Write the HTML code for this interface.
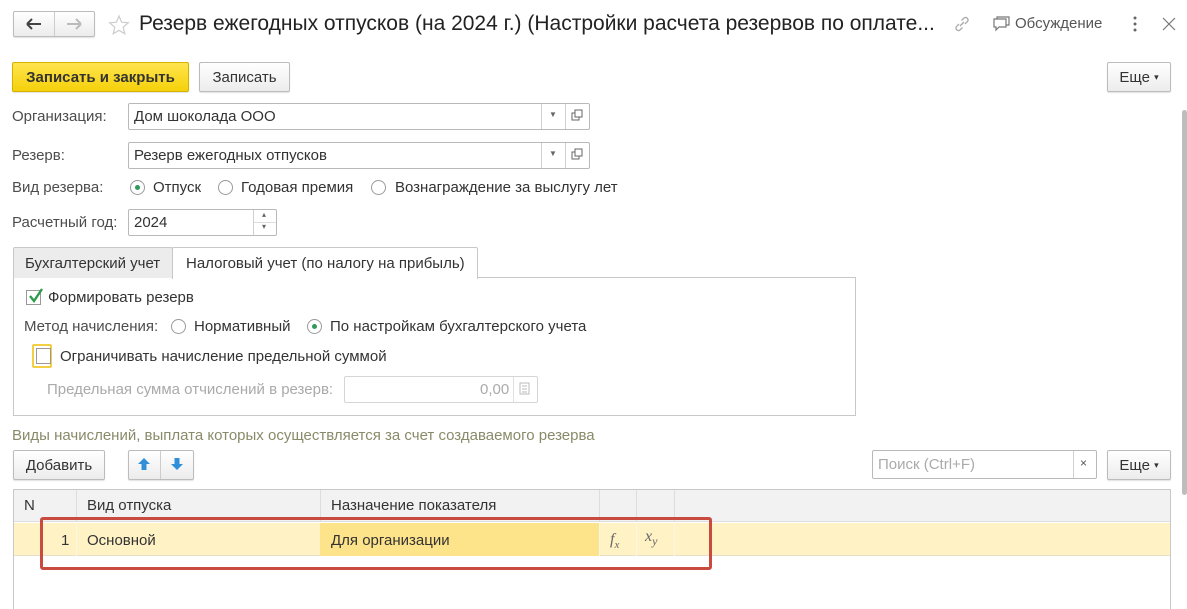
<!DOCTYPE html>
<html><head><meta charset="utf-8"><style>
*{box-sizing:border-box;margin:0;padding:0}
body{width:1187px;height:602px;background:#fff;font-family:"Liberation Sans",Arial,sans-serif;font-size:15px;color:#333;position:relative;overflow:hidden}
.a{position:absolute;white-space:nowrap}
.btn{position:absolute;border:1px solid #bcbcbc;border-radius:2px;background:linear-gradient(#fff,#ececec);box-shadow:0 1px 1px rgba(0,0,0,.12);display:flex;align-items:center;justify-content:center;font-size:15px;color:#333}
.fld{position:absolute;border:1px solid #b9b9b9;border-radius:2px;background:#fff;font-size:15px;color:#333;padding-left:5px;display:flex;align-items:center}
.rb{position:absolute;width:15px;height:15px;border:1px solid #9a9a9a;border-radius:50%;background:#fff}
.rb.on::after{content:"";position:absolute;left:4px;top:4px;width:5px;height:5px;border-radius:50%;background:#2f9a5a}
.lbl{position:absolute;white-space:nowrap;font-size:15px;color:#4d4d4d}
.sep{position:absolute;width:1px;background:#d0d0d0}
</style></head><body>
<div class="btn" style="left:13px;top:11px;width:82px;height:26px;"></div>
<div class="sep" style="left:54px;top:12px;height:24px;background:#ccc"></div>
<svg class="a" style="left:26px;top:18px" width="16" height="12"><path d="M1 6H15M1 6L6 1M1 6L6 11" stroke="#444" stroke-width="2" fill="none"/></svg>
<svg class="a" style="left:66px;top:18px" width="16" height="12"><path d="M1 6H15M15 6L10 1M15 6L10 11" stroke="#bbb" stroke-width="2" fill="none"/></svg>
<svg class="a" style="left:108px;top:14px" width="22" height="22"><path d="M11 2L13.6 8.2 20.3 8.8 15.2 13.2 16.8 19.8 11 16.3 5.2 19.8 6.8 13.2 1.7 8.8 8.4 8.2Z" fill="none" stroke="#ccc" stroke-width="1.2"/></svg>
<div class="a" style="left:139px;top:12px;font-size:21px;color:#222">Резерв ежегодных отпусков (на 2024 г.) (Настройки расчета резервов по оплате...</div>
<svg class="a" style="left:953px;top:15px" width="18" height="18"><path d="M7 11L11 7M6 9L3.5 11.5a2.5 2.5 0 0 0 3.5 3.5L9.5 12.5M12 9L14.5 6.5a2.5 2.5 0 0 0-3.5-3.5L8.5 5.5" stroke="#aaa" stroke-width="1.3" fill="none"/></svg>
<svg class="a" style="left:990px;top:15px" width="22" height="18"><path d="M4 4H16V12H9L6 15V12H4Z" fill="#fff" stroke="#777" stroke-width="1.2"/><path d="M7 4V2H19V10H16" fill="none" stroke="#777" stroke-width="1.2"/></svg>
<div class="a" style="left:1015px;top:15px;font-size:15px;color:#555">Обсуждение</div>
<svg class="a" style="left:1131px;top:15px" width="8" height="18"><circle cx="4" cy="3" r="1.5" fill="#666"/><circle cx="4" cy="9" r="1.5" fill="#666"/><circle cx="4" cy="15" r="1.5" fill="#666"/></svg>
<svg class="a" style="left:1162px;top:17px" width="14" height="14"><path d="M1 1L13 13M13 1L1 13" stroke="#777" stroke-width="1.2"/></svg>
<div class="btn" style="left:12px;top:62px;width:177px;height:30px;background:linear-gradient(#ffe44d,#f5d10a);border-color:#d3b300;font-weight:bold;color:#333">Записать и закрыть</div>
<div class="btn" style="left:199px;top:62px;width:91px;height:30px;">Записать</div>
<div class="btn" style="left:1107px;top:62px;width:64px;height:30px;">Еще&nbsp;<span style="font-size:9px">▾</span></div>
<div class="lbl" style="left:12px;top:108px">Организация:</div>
<div class="fld" style="left:128px;top:103px;width:462px;height:27px">Дом шоколада ООО</div>
<div class="sep" style="left:541px;top:104px;height:25px"></div><div class="sep" style="left:565px;top:104px;height:25px"></div>
<div class="a" style="left:549px;top:110px;font-size:8px;color:#666">▼</div>
<svg class="a" style="left:571px;top:109px" width="13" height="13"><rect x="1" y="4" width="7" height="7" fill="#fff" stroke="#666"/><rect x="4" y="1" width="7" height="7" fill="#fff" stroke="#666"/></svg>
<div class="lbl" style="left:12px;top:147px">Резерв:</div>
<div class="fld" style="left:128px;top:142px;width:462px;height:27px">Резерв ежегодных отпусков</div>
<div class="sep" style="left:541px;top:143px;height:25px"></div><div class="sep" style="left:565px;top:143px;height:25px"></div>
<div class="a" style="left:549px;top:149px;font-size:8px;color:#666">▼</div>
<svg class="a" style="left:571px;top:148px" width="13" height="13"><rect x="1" y="4" width="7" height="7" fill="#fff" stroke="#666"/><rect x="4" y="1" width="7" height="7" fill="#fff" stroke="#666"/></svg>
<div class="lbl" style="left:12px;top:179px">Вид резерва:</div>
<div class="rb on" style="left:130px;top:180px"></div><div class="lbl" style="left:153px;top:179px;color:#333">Отпуск</div>
<div class="rb" style="left:218px;top:180px"></div><div class="lbl" style="left:241px;top:179px;color:#333">Годовая премия</div>
<div class="rb" style="left:371px;top:180px"></div><div class="lbl" style="left:395px;top:179px;color:#333">Вознаграждение за выслугу лет</div>
<div class="lbl" style="left:12px;top:214px">Расчетный год:</div>
<div class="fld" style="left:128px;top:209px;width:149px;height:27px">2024</div>
<div class="sep" style="left:253px;top:210px;height:25px"></div>
<div class="a" style="left:254px;top:222px;width:22px;height:1px;background:#ddd"></div>
<div class="a" style="left:262px;top:210px;font-size:8px;color:#666">▴</div>
<div class="a" style="left:262px;top:222px;font-size:8px;color:#666">▾</div>
<div class="a" style="left:13px;top:277px;width:843px;height:139px;border:1px solid #c8c8c8"></div>
<div class="a" style="left:13px;top:247px;width:160px;height:31px;background:#ececec;border:1px solid #c8c8c8;border-bottom:none;border-radius:2px 2px 0 0"></div>
<div class="lbl" style="left:25px;top:255px;color:#333">Бухгалтерский учет</div>
<div class="a" style="left:172px;top:247px;width:306px;height:32px;background:#fff;border:1px solid #c8c8c8;border-bottom:none;border-radius:2px 2px 0 0"></div>
<div class="lbl" style="left:186px;top:255px;color:#333">Налоговый учет (по налогу на прибыль)</div>
<div class="a" style="left:26px;top:290px;width:15px;height:15px;border:1px solid #999;background:#fff"></div>
<svg class="a" style="left:27px;top:286px" width="18" height="18"><path d="M3 10L7 15L15 3" stroke="#2d9a4c" stroke-width="2.4" fill="none"/></svg>
<div class="lbl" style="left:48px;top:289px;color:#333">Формировать резерв</div>
<div class="lbl" style="left:24px;top:318px">Метод начисления:</div>
<div class="rb" style="left:171px;top:319px"></div><div class="lbl" style="left:194px;top:318px;color:#333">Нормативный</div>
<div class="rb on" style="left:307px;top:319px"></div><div class="lbl" style="left:330px;top:318px;color:#333">По настройкам бухгалтерского учета</div>
<div class="a" style="left:32px;top:344px;width:20px;height:24px;border:2px solid #f2cf44;border-radius:2px"></div>
<div class="a" style="left:36px;top:348px;width:15px;height:16px;border:1px solid #999;background:#fff"></div>
<div class="lbl" style="left:60px;top:348px;color:#333">Ограничивать начисление предельной суммой</div>
<div class="lbl" style="left:47px;top:381px;color:#aaa">Предельная сумма отчислений в резерв:</div>
<div class="fld" style="left:344px;top:376px;width:194px;height:27px;border-color:#d6d6d6"></div>
<div class="a" style="left:480px;top:381px;color:#aaa">0,00</div>
<div class="sep" style="left:513px;top:377px;height:25px;background:#e0e0e0"></div>
<svg class="a" style="left:519px;top:382px" width="12" height="14"><rect x="1" y="1" width="9" height="11" fill="none" stroke="#bbb"/><path d="M3 4H8M3 7H8M3 10H8" stroke="#bbb"/></svg>
<div class="lbl" style="left:12px;top:427px;color:#8a8a6a">Виды начислений, выплата которых осуществляется за счет создаваемого резерва</div>
<div class="btn" style="left:13px;top:450px;width:92px;height:30px;">Добавить</div>
<div class="btn" style="left:128px;top:450px;width:66px;height:30px;"></div>
<div class="sep" style="left:160px;top:451px;height:28px;background:#ccc"></div>
<svg class="a" style="left:137px;top:457px" width="14" height="14"><path d="M7 1L13 7H9.5V13H4.5V7H1Z" fill="#2f8fd8"/></svg>
<svg class="a" style="left:170px;top:457px" width="14" height="14"><path d="M7 13L13 7H9.5V1H4.5V7H1Z" fill="#2f8fd8"/></svg>
<div class="fld" style="left:872px;top:450px;width:225px;height:29px;color:#aaa">Поиск (Ctrl+F)</div>
<div class="sep" style="left:1073px;top:451px;height:27px"></div>
<div class="a" style="left:1080px;top:456px;font-size:12px;color:#555">×</div>
<div class="btn" style="left:1107px;top:450px;width:64px;height:30px;">Еще&nbsp;<span style="font-size:9px">▾</span></div>
<div class="a" style="left:13px;top:489px;width:1158px;height:120px;border:1px solid #c8c8c8;border-bottom:none"></div>
<div class="a" style="left:14px;top:490px;width:1156px;height:32px;background:#f2f2f2;border-bottom:1px solid #ddd"></div>
<div class="sep" style="left:76px;top:490px;height:32px;background:#ddd"></div>
<div class="sep" style="left:320px;top:490px;height:32px;background:#ddd"></div>
<div class="sep" style="left:599px;top:490px;height:32px;background:#ddd"></div>
<div class="sep" style="left:636px;top:490px;height:32px;background:#ddd"></div>
<div class="sep" style="left:674px;top:490px;height:32px;background:#ddd"></div>
<div class="lbl" style="left:24px;top:497px;color:#333">N</div>
<div class="lbl" style="left:87px;top:497px;color:#333">Вид отпуска</div>
<div class="lbl" style="left:331px;top:497px;color:#333">Назначение показателя</div>
<div class="a" style="left:14px;top:523px;width:1156px;height:33px;background:#fff2c5;border-bottom:1px solid #e6e0c8"></div>
<div class="a" style="left:320px;top:523px;width:279px;height:33px;background:#fde38a"></div>
<div class="sep" style="left:76px;top:523px;height:33px;background:#fbf7e8"></div>
<div class="sep" style="left:599px;top:523px;height:33px;background:#fbf7e8"></div>
<div class="sep" style="left:636px;top:523px;height:33px;background:#fbf7e8"></div>
<div class="sep" style="left:674px;top:523px;height:33px;background:#fbf7e8"></div>
<div class="lbl" style="left:61px;top:532px;color:#333">1</div>
<div class="lbl" style="left:87px;top:532px;color:#333">Основной</div>
<div class="lbl" style="left:331px;top:532px;color:#333">Для организации</div>
<div class="a" style="left:610px;top:531px;font-family:'Liberation Serif',serif;font-style:italic;font-size:16px;color:#666">f<sub style="font-size:11px">x</sub></div>
<div class="a" style="left:645px;top:528px;font-family:'Liberation Serif',serif;font-style:italic;font-size:16px;color:#666">x<sub style="font-size:12px">y</sub></div>
<div class="a" style="left:40px;top:517px;width:672px;height:53px;border:3px solid #c94a3e;border-radius:3px"></div>
<div class="a" style="left:1182px;top:110px;width:5px;height:385px;background:#bdbdbd;border-radius:3px"></div>
</body></html>
